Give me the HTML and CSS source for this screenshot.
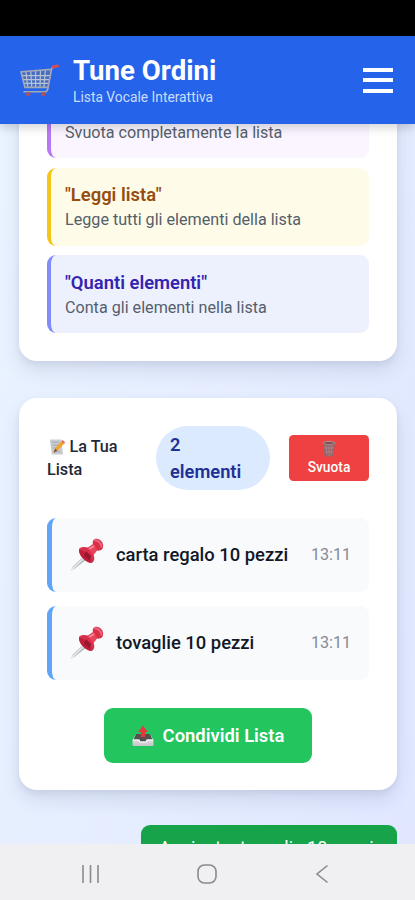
FILE: index.html
```html
<!DOCTYPE html>
<html lang="it">
<head>
<meta charset="utf-8">
<title>Tune Ordini</title>
<link rel="stylesheet" href="styles.css">
</head>
<body>
<svg class="defs" width="0" height="0" aria-hidden="true">
  <defs>
    <linearGradient id="tray" x1="0" y1="0" x2="0" y2="1"><stop offset="0" stop-color="#f4f4f5"/><stop offset="1" stop-color="#c4c4c9"/></linearGradient>
    <symbol id="pin" viewBox="0 0 34 34">
      <path d="M1 32.500 L3 28.500 L14 18 L17 21 L5 30.500Z" fill="#b4bbc0"/>
      <path d="M2 31.500 L15 19" stroke="#eef2f3" stroke-width="1.200"/>
      <path d="M9 11 C11 8.500 15 9 18 9.500 L23 6 C22 3 24 .5 27 .8 C31 1.500 34 5.500 33 9.500 C32 12.500 29 13 27 12.500 L23.500 17 C25 20 24.500 24 21.500 25 C17 25.500 8 18 9 11Z" fill="#d92f49"/>
      <path d="M9 12 C13 11 21 18 21.500 24.500 C16 24.500 9 18 9 12Z" fill="#bd203b"/>
      <path d="M18 10 L24 6 L27 12 L23 17Z" fill="#e9465e"/>
      <path d="M19 11 L24 8" stroke="#f98b9a" stroke-width="1.800"/>
      <path d="M24 2.500 C28 1.500 32 6 31.500 9.500" fill="none" stroke="#f06377" stroke-width="2"/>
      <path d="M16 13 L21 18 L20 23 L14 18Z" fill="#9c1430"/>
    </symbol>
  </defs>
</svg>
<div class="status"></div>
<header class="header">
  <svg class="cart" viewBox="0 0 42 36">
    <path d="M2 8 L33 5.500 L30 24 L6 24Z" fill="#66789e" opacity=".55"/>
    <path d="M3 12 H32 M4 16 H31 M5 20 H31 M7 8 L9 24 M12 7.500 L13 24 M17 7 V24 M22 7 L21.500 24 M27 6.500 L25.500 24" stroke="#b9c3d4" stroke-width="1.200" fill="none"/>
    <path d="M2 8 L33 5.500 M2 8 L6 24 H30 M37 2.500 L33.500 4.500 L29.500 26 L28 28.500 H5" stroke="#a2a8b5" stroke-width="1.700" fill="none" stroke-linecap="round"/>
    <path d="M35 3 L39.500 2" stroke="#d94a54" stroke-width="3" stroke-linecap="round"/>
    <circle cx="9.500" cy="31" r="2.200" fill="#b0505c"/><circle cx="25" cy="31" r="2.200" fill="#b0505c"/>
  </svg>
  <div class="brand">
    <h1>Tune Ordini</h1>
    <p>Lista Vocale Interattiva</p>
  </div>
  <div class="menu"><i></i><i></i><i></i></div>
</header>
<main class="content">
  <section class="card commands">
    <div class="command purple"><p>Svuota completamente la lista</p></div>
    <div class="command yellow"><h3>"Leggi lista"</h3><p>Legge tutti gli elementi della lista</p></div>
    <div class="command indigo"><h3>"Quanti elementi"</h3><p>Conta gli elementi nella lista</p></div>
  </section>
  <section class="card list">
    <div class="list-head">
      <h2><svg class="memo" viewBox="0 0 18 18"><path d="M2 1 H14 L16 17 H4Z" fill="#c9cdd2"/><path d="M4 4 H12 M4.500 7 H11 M5 10 H9 M5.500 14 H13" stroke="#a3a9b1"/><path d="M6 15 L7.500 10.500 L15 2 L18 4.500 L10 13Z" fill="#f5a32c"/><path d="M6 15 L7.500 10.500 L10 13Z" fill="#735647"/><path d="M14 3 L15.500 1.500 L18 4 L17 5.500Z" fill="#e36b65"/></svg> La Tua<br>Lista</h2>
      <div class="count">2<br>elementi</div>
      <button class="clear">
        <svg class="trash" viewBox="0 0 14 18"><path d="M1 3 H13 L11.500 15.500 Q7 18 2.500 15.500Z" fill="#94666a"/><path d="M4 5 L5 15 M7 5 V16 M10 5 L9 15 M2 8 H12 M2.500 12 H11.500" stroke="#ad8587" stroke-width=".8"/><ellipse cx="7" cy="2.800" rx="6.500" ry="2" fill="#a98b8b"/><ellipse cx="7" cy="3" rx="4.800" ry=".9" fill="#7b5053"/></svg>
        <span>Svuota</span>
      </button>
    </div>
    <div class="item"><svg class="pin"><use href="#pin"/></svg><span class="name">carta regalo 10 pezzi</span><time>13:11</time></div>
    <div class="item"><svg class="pin"><use href="#pin"/></svg><span class="name">tovaglie 10 pezzi</span><time>13:11</time></div>
    <button class="share">
      <svg class="outbox" viewBox="0 0 22 22"><path d="M4 9 H18 L21.500 15 V20 Q21.500 21 20 21 H2 Q.5 21 .5 20 V15Z" fill="url(#tray)"/><path d="M4 9 H18 L20.500 14.500 H15 L14 16.500 H8 L7 14.500 H1.500Z" fill="#55504f"/><path d="M1 15 H7 L8 17 H14 L15 15 H21" fill="none" stroke="#fff" stroke-width="1.200"/><path d="M11 .8 L16 7 H13.200 V12 H8.800 V7 H6Z" fill="#e3383f"/></svg>
      <span>Condividi Lista</span>
    </button>
  </section>
  <div class="toast">Aggiunto: tovaglie 10 pezzi</div>
</main>
<nav class="navbar">
  <svg viewBox="0 0 20 20"><path d="M2 1 V19 M9.500 1 V19 M17 1 V19"/></svg>
  <svg viewBox="0 0 20 20"><rect x="1" y="1" width="18" height="18" rx="6.500"/></svg>
  <svg viewBox="0 0 20 20"><path d="M14.500 1.500 L4 10 L14.500 18.500"/></svg>
</nav>
</body>
</html>
```
FILE: styles.css
```css
* { box-sizing: border-box; margin: 0; padding: 0; }
body {
  width: 415px; height: 900px; overflow: hidden;
  display: flex; flex-direction: column;
  font-family: Roboto, "Liberation Sans", sans-serif;
  color: #1f2937; background: #f0f0f2;
}
.defs { position: absolute; }
button { border: 0; font-family: inherit; color: #fff; }
.status { height: 36px; background: #000; flex: none; }
.header {
  position: relative; z-index: 2; flex: none;
  height: 88px; padding: 0 22px 0 19px;
  display: flex; align-items: center;
  background: #2563eb; color: #fff;
  box-shadow: 0 4px 9px rgba(0, 0, 0, .16);
}
.cart { width: 41px; height: 35px; margin: 2px 13px 0 0; }
.brand { flex: 1; white-space: nowrap; }
.brand h1 { font-size: 27.6px; line-height: 34px; font-weight: 700; }
.brand p { font-size: 13.8px; line-height: 19px; color: #c9defc; }
.menu { width: 30px; display: flex; flex-direction: column; gap: 6.5px; }
.menu i { height: 4px; background: #fff; }
.content {
  position: relative; flex: none; height: 720px; overflow: hidden;
  padding: 0 18px 0 19px;
  background: linear-gradient(105deg, #eaf3ff 0%, #e0e7ff 100%);
}
.card {
  background: #fff; border-radius: 18px; padding: 28px;
  box-shadow: 0 10px 18px rgba(60, 70, 110, .12), 0 3px 6px rgba(60, 70, 110, .08);
}
.commands { margin-top: -72px; height: 309px; display: flex; flex-direction: column; gap: 9.5px; }
.command {
  height: 78px; flex: none; padding: 13.5px 14px 0;
  border-left: 4.5px solid; border-radius: 9px; white-space: nowrap;
}
.command h3 { font-size: 18.4px; line-height: 27px; font-weight: 600; }
.command p { font-size: 16.15px; line-height: 23px; color: #555e6b; }
.command.purple { padding-top: 41px; background: #faf5ff; border-color: #b778f5; }
.yellow { background: #fefce8; border-color: #f5c518; }
.yellow h3 { color: #964d10; }
.indigo { background: #edf1fe; border-color: #818cf8; }
.indigo h3 { color: #3423b0; }
.list { margin-top: 37px; height: 392px; }
.list-head { display: flex; align-items: center; height: 64px; margin-bottom: 28px; }
.list-head h2 { width: 109px; font-size: 16.2px; line-height: 23px; font-weight: 500; white-space: nowrap; }
.memo { width: 17px; height: 18px; margin: 0 .5px 0 1px; vertical-align: -4px; }
.count {
  width: 114px; height: 64px; border-radius: 32px; padding: 5px 14px;
  background: #dbeafe; color: #1e3095;
  font-size: 18.3px; line-height: 27px; font-weight: 600;
}
.clear {
  width: 80px; height: 46px; margin-left: 19px; border-radius: 4.5px;
  background: #ef4141; display: flex; flex-direction: column; align-items: center;
  font-size: 13.8px; line-height: 18px; font-weight: 500; padding-top: 5px;
}
.trash { width: 14px; height: 18px; }
.item {
  height: 74px; margin-bottom: 14px; padding: 0 18px 1px 18px;
  border-left: 5px solid #60a5fa; border-radius: 9px; background: #f9fafb;
  display: flex; align-items: center; white-space: nowrap;
}
.pin { width: 34px; height: 34px; margin-right: 12px; }
.name { flex: 1; font-size: 18.4px; font-weight: 500; color: #111827; }
.item time { font-size: 16.1px; color: #858a94; }
.share {
  width: 208px; height: 55px; margin: 28px auto 0; border-radius: 9px;
  display: flex; align-items: center; justify-content: center; gap: 9px;
  background: #22c55e; font-size: 18.4px; font-weight: 600; white-space: nowrap;
}
.outbox { width: 22px; height: 22px; }
.toast {
  position: absolute; left: 141px; top: 701px; width: 256px; height: 64px;
  padding: 9px 18px; border-radius: 9px; background: #16a34a; color: #fff;
  font-size: 18px; line-height: 27px; white-space: nowrap;
}
.navbar { height: 56px; flex: none; display: flex; align-items: center; padding: 4px 82px 0 81px; justify-content: space-between; background: #f0f0f2; }
.navbar svg { width: 20px; height: 20px; fill: none; stroke: #8b8b8e; stroke-width: 1.6; }
```
